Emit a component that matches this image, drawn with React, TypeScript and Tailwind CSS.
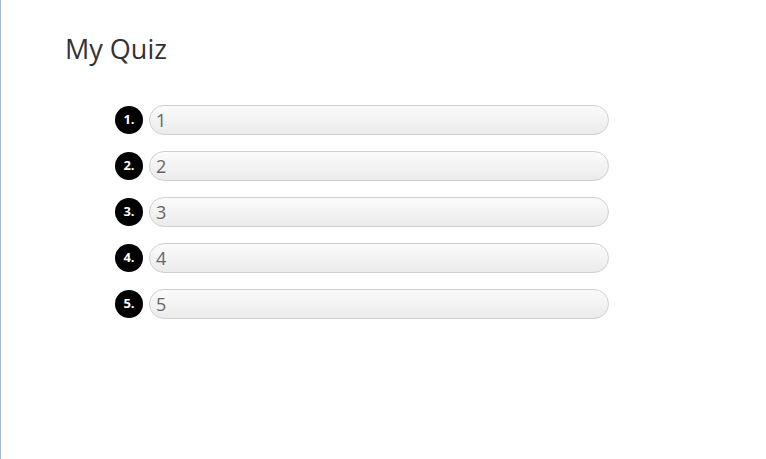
import React from 'react';

const answers = ['1', '2', '3', '4', '5'];

export default function App() {
  return (
    <div className="min-h-[459px] w-[766px] border-l border-[#a9b8c6] bg-white font-['Open_Sans',sans-serif]">
      <div className="pl-[64px] pt-[31px]">
        <h1 className="text-[27px] leading-[36px] text-[#333]">My Quiz</h1>

        {/* Answer rows */}
        <div className="mt-[38px] flex flex-col gap-4 pl-[50px]">
          {answers.map((a, i) => (
            <div key={a} className="flex items-center gap-[6px]">
              <div className="flex h-[28px] w-[28px] items-center justify-center rounded-full bg-black text-[13px] font-bold text-white">
                {i + 1}.
              </div>
              <div className="flex h-[30px] w-[460px] items-center rounded-full border border-[#d0d0d0] bg-gradient-to-b from-[#fbfbfb] to-[#ebebeb] pl-[6px] text-[18px] text-[#666]">
                {a}
              </div>
            </div>
          ))}
        </div>
      </div>
    </div>
  );
}
